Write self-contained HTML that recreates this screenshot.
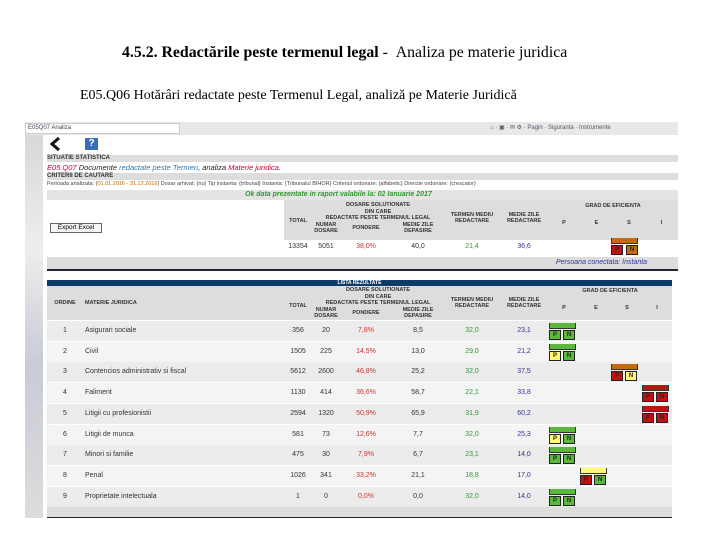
<!DOCTYPE html>
<html><head><meta charset="utf-8"><style>
*{margin:0;padding:0;box-sizing:border-box}
body{width:720px;height:540px;background:#fff;position:relative;overflow:hidden;font-family:"Liberation Sans",sans-serif}
.a{position:absolute;white-space:nowrap}
.s{font-size:6px;color:#333}
.h{font-size:5.5px;font-weight:bold;color:#333;text-align:center;line-height:6px}
.c{font-size:7px;text-align:center;color:#333}
.bar{position:absolute;height:6px;border:1px solid #333;border-top:none}
.sq{position:absolute;width:12px;height:10px;border:1px solid #222;font-size:6px;font-weight:bold;text-align:center;line-height:9px;color:#222}
</style></head><body>
<div class="a" style="left:122px;top:44px;font-family:'Liberation Serif',serif;font-size:15.8px;"><b>4.5.2. Redactările peste termenul legal</b> - &nbsp;Analiza pe materie juridica</div>
<div class="a" style="left:80px;top:88px;font-family:'Liberation Serif',serif;font-size:14px;">E05.Q06 Hotărâri redactate peste Termenul Legal, analiză pe Materie Juridică</div>

<div class="a" style="left:25px;top:122px;width:653px;height:396px;background:#f4f4f4"></div>
<div class="a" style="left:25px;top:122px;width:653px;height:13px;background:#e8e8e8"></div>
<div class="a" style="left:25px;top:123px;width:155px;height:11px;background:#fff;border:1px solid #ccc;font-size:6px;color:#445;padding-left:2px;line-height:9px">E05Q07 Analiza</div>
<div class="a" style="left:490px;top:124px;font-size:6px;color:#556">⌂ · ▣ · ✉ ⚙ · Pagin · Siguranta · Instrumente</div>
<div class="a" style="left:25px;top:135px;width:18px;height:383px;background:linear-gradient(#d8d8d8,#eee 30%,#c8cbd6 60%,#ddd)"></div>
<div class="a" style="left:43px;top:135px;width:635px;height:383px;background:#fff"></div>
<svg class="a" style="left:49px;top:137px" width="14" height="14"><path d="M10 1 L3 7 L10 13" stroke="#111" stroke-width="3" fill="none"/></svg>
<div class="a" style="left:85px;top:138px;width:13px;height:12px;background:#3a6fb5;color:#fff;font-weight:bold;font-size:10px;text-align:center;line-height:12px">?</div>
<div class="a s" style="left:47px;top:155px;width:631px;height:7px;background:#ddd;font-weight:bold;line-height:7px">SITUATIE STATISTICA</div>
<div class="a" style="left:47px;top:163px;font-size:7.5px;font-style:italic;color:#222"><span style="color:#c03">E05.Q07</span> Documente <span style="color:#37a">redactate peste Termen</span>, analiza <span style="color:#c03">Materie juridica</span>.</div>
<div class="a s" style="left:47px;top:173px;width:631px;height:7px;background:#ddd;font-weight:bold;line-height:7px">CRITERII DE CAUTARE</div>
<div class="a" style="left:47px;top:181px;font-size:5.5px;color:#444">Perioada analizata: {<span style="color:#c60">01.01.2016 - 31.12.2016</span>} Dosar arhivat: {nu} Tip instanta: {tribunal} Instanta: {Tribunalul BIHOR} Criteriul ordonare: {alfabetic} Directie ordonare: {crescator}</div>
<div class="a" style="left:47px;top:190px;width:631px;height:10px;background:#e4e4e4"></div>
<div class="a" style="left:245px;top:191px;font-size:7px;font-style:italic;font-weight:bold;color:#393">Ok data prezentate in raport valabile la: 02 Ianuarie 2017</div>
<div class="a" style="left:284px;top:200px;width:394px;height:40px;background:#ddd"></div>
<div class="a h" style="left:312px;top:202px;width:132px">DOSARE SOLUTIONATE</div>
<div class="a h" style="left:312px;top:209px;width:132px">DIN CARE<br>REDACTATE PESTE TERMENUL LEGAL</div>
<div class="a h" style="left:284px;top:218px;width:28px">TOTAL</div>
<div class="a h" style="left:312px;top:222px;width:28px">NUMAR<br>DOSARE</div>
<div class="a h" style="left:340px;top:225px;width:52px">PONDERE</div>
<div class="a h" style="left:392px;top:222px;width:52px">MEDIE ZILE<br>DEPASIRE</div>
<div class="a h" style="left:444px;top:212px;width:56px">TERMEN MEDIU<br>REDACTARE</div>
<div class="a h" style="left:500px;top:212px;width:48px">MEDIE ZILE<br>REDACTARE</div>
<div class="a h" style="left:548px;top:203px;width:130px">GRAD DE EFICIENTA</div>
<div class="a h" style="left:548px;top:220px;width:32px">P</div><div class="a h" style="left:580px;top:220px;width:33px">E</div><div class="a h" style="left:613px;top:220px;width:32px">S</div><div class="a h" style="left:645px;top:220px;width:33px">I</div>
<div class="a" style="left:50px;top:223px;width:52px;height:10px;border:1px solid #666;background:#f4f4f4;font-size:6.5px;text-align:center;line-height:8px">Export Excel</div>
<div class="a c" style="left:284px;top:243px;width:28px">13354</div>
<div class="a c" style="left:312px;top:243px;width:28px">5051</div>
<div class="a c" style="left:340px;top:243px;width:52px;color:#c33">38,0%</div>
<div class="a c" style="left:392px;top:243px;width:52px">40,0</div>
<div class="a c" style="left:444px;top:243px;width:56px;color:#393">21,4</div>
<div class="a c" style="left:500px;top:243px;width:48px;color:#339">36,6</div>
<div class="bar" style="left:611px;top:238px;width:27px;background:#c46a10"></div>
<div class="sq" style="left:611px;top:245px;background:#c01010">P</div><div class="sq" style="left:626px;top:245px;background:#c46a10">N</div>
<div class="a" style="left:47px;top:257px;width:631px;height:12px;background:#ddd"></div>
<div class="a" style="left:556px;top:259px;font-size:7px;font-style:italic;color:#33a">Persoana conectata: Instanta</div>
<div class="a" style="left:47px;top:269px;width:631px;height:2px;background:#223"></div>

<div class="a" style="left:47px;top:280px;width:625px;height:6px;background:#0e3a6a;color:#fff;font-size:5px;text-align:center;line-height:6px;font-weight:bold">LISTA REZULTATE</div>
<div class="a" style="left:47px;top:286px;width:625px;height:34px;background:#ddd"></div>
<div class="a h" style="left:47px;top:300px;width:36px">ORDINE</div>
<div class="a h" style="left:85px;top:300px;text-align:left">MATERIE JURIDICA</div>
<div class="a h" style="left:312px;top:287px;width:132px">DOSARE SOLUTIONATE</div>
<div class="a h" style="left:312px;top:294px;width:132px">DIN CARE<br>REDACTATE PESTE TERMENUL LEGAL</div>
<div class="a h" style="left:284px;top:303px;width:28px">TOTAL</div>
<div class="a h" style="left:312px;top:307px;width:28px">NUMAR<br>DOSARE</div>
<div class="a h" style="left:340px;top:310px;width:52px">PONDERE</div>
<div class="a h" style="left:392px;top:307px;width:52px">MEDIE ZILE<br>DEPASIRE</div>
<div class="a h" style="left:444px;top:297px;width:56px">TERMEN MEDIU<br>REDACTARE</div>
<div class="a h" style="left:500px;top:297px;width:48px">MEDIE ZILE<br>REDACTARE</div>
<div class="a h" style="left:548px;top:288px;width:124px">GRAD DE EFICIENTA</div>
<div class="a h" style="left:548px;top:305px;width:32px">P</div><div class="a h" style="left:580px;top:305px;width:32px">E</div><div class="a h" style="left:612px;top:305px;width:30px">S</div><div class="a h" style="left:642px;top:305px;width:30px">I</div>

<div id="rows"></div>
<div class="a" style="left:47px;top:507px;width:625px;height:10px;background:#ddd"></div>
<div class="a" style="left:47px;top:517px;width:625px;height:1px;background:#223"></div>

<script>
var d=[
["1","Asigurari sociale","356","20","7,8%","8,5","32,0","23,1","P","gg"],
["2","Civil","1505","225","14,5%","13,0","29,0","21,2","P","yg"],
["3","Contencios administrativ si fiscal","5612","2600","46,8%","25,2","32,0","37,5","S","ry"],
["4","Faliment","1130","414","36,6%","58,7","22,1","33,8","I","rr"],
["5","Litigii cu profesionistii","2594","1320","50,9%","65,9","31,9","60,2","I","rr"],
["6","Litigii de munca","581","73","12,6%","7,7","32,0","25,3","P","yg"],
["7","Minori si familie","475","30","7,9%","6,7","23,1","14,0","P","gg"],
["8","Penal","1026","341","33,2%","21,1","18,8","17,0","E","rg"],
["9","Proprietate intelectuala","1","0","0,0%","0,0","32,0","14,0","P","gg"]];
var col={g:"#5cb83a",y:"#fff870",r:"#c01010"},bcol={P:"#5cb83a",E:"#fff870",S:"#c46a10",I:"#c01010"},gx={P:549,E:580,S:611,I:642};
var h="";
d.forEach(function(r,i){var t=321+i*20.7;
h+='<div class="a" style="left:47px;top:'+t+'px;width:625px;height:20px;background:'+(i%2?'#f4f4f4':'#ececec')+'"></div>';
var cy=t+6;
h+='<div class="a c" style="left:47px;top:'+cy+'px;width:36px">'+r[0]+'</div>';
h+='<div class="a" style="left:85px;top:'+cy+'px;font-size:7px;color:#333">'+r[1]+'</div>';
var cs=[[284,28,'#333'],[312,28,'#333'],[340,52,'#c33'],[392,52,'#333'],[444,56,'#393'],[500,48,'#339']];
cs.forEach(function(c,j){h+='<div class="a c" style="left:'+c[0]+'px;top:'+cy+'px;width:'+c[1]+'px;color:'+c[2]+'">'+r[j+2]+'</div>';});
var x=gx[r[8]];
h+='<div class="bar" style="left:'+x+'px;top:'+(t+2)+'px;width:27px;background:'+bcol[r[8]]+'"></div>';
h+='<div class="sq" style="left:'+x+'px;top:'+(t+9)+'px;background:'+col[r[9][0]]+'">P</div>';
h+='<div class="sq" style="left:'+(x+14)+'px;top:'+(t+9)+'px;background:'+col[r[9][1]]+'">N</div>';
});
document.getElementById("rows").innerHTML=h;
</script>
</body></html>
